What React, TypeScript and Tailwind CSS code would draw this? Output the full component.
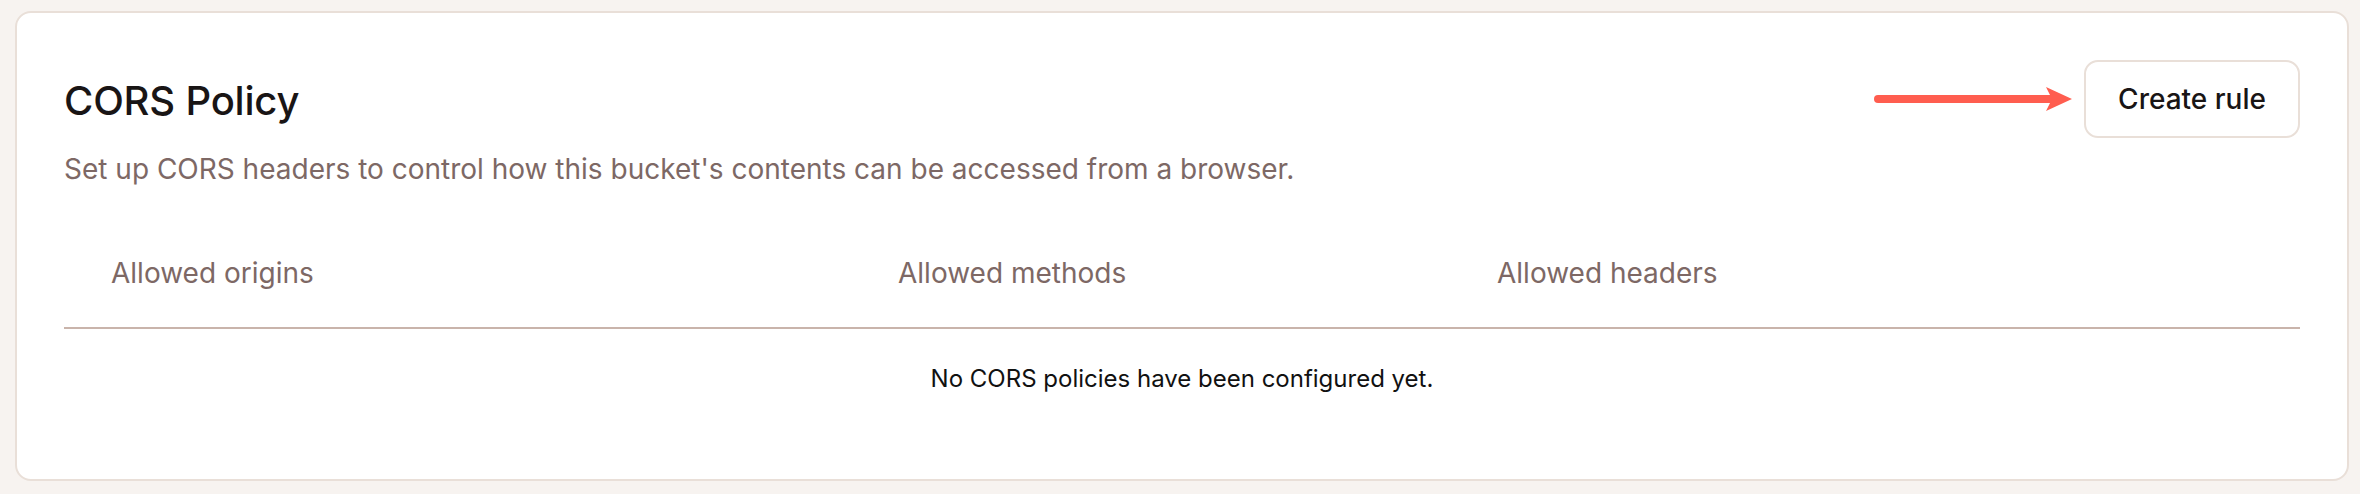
import React from "react";

function Arrow() {
  return (
    <svg width="200" height="26" viewBox="0 0 200 26" className="block">
      <line x1="4" y1="13" x2="180" y2="13" stroke="#ff5d4f" strokeWidth="8" strokeLinecap="round" />
      <path d="M172 1 L198 13 L172 25 L178 13 Z" fill="#ff5d4f" />
    </svg>
  );
}

export default function App() {
  return (
    <div
      className="w-[2360px] h-[494px] bg-[#f7f3f0] pt-[11px] pl-[15px] pr-[11px]"
      style={{ fontFamily: "Inter, 'Noto Sans', sans-serif" }}
    >
      <div className="h-[470px] rounded-[16px] border-2 border-[#e9dfd8] bg-white pl-[47px] pr-[47px] pt-[47px]">
        <div className="flex items-start justify-between">
          <div className="flex flex-col">
            <h1 className="mt-[17px] text-[40px] leading-[48px] font-medium text-[#191515] tracking-[-0.2px]">
              CORS Policy
            </h1>
            <p className="mt-[25px] text-[28px] leading-[38px] text-[#7d6865]">
              Set up CORS headers to control how this bucket's contents can be accessed from a browser.
            </p>
          </div>
          <div className="flex items-center gap-[10px]">
            <Arrow />
            <button className="h-[78px] w-[216px] rounded-[14px] border-2 border-[#e9dfd8] bg-white text-[28px] font-medium text-[#191515]">
              Create rule
            </button>
          </div>
        </div>
        <div className="mt-[30px]">
          <div className="grid grid-cols-[787px_599px_1fr] border-b-2 border-[#c9b4ab] text-[28px] leading-[38px] text-[#7d6865]">
            <div className="pl-[47px] pt-[36px] pb-[35px]">Allowed origins</div>
            <div className="pl-[47px] pt-[36px] pb-[35px]">Allowed methods</div>
            <div className="pl-[47px] pt-[36px] pb-[35px]">Allowed headers</div>
          </div>
          <div className="pt-[32px] text-center text-[24px] leading-[36px] text-[#111111]">
            No CORS policies have been configured yet.
          </div>
        </div>
      </div>
    </div>
  );
}
